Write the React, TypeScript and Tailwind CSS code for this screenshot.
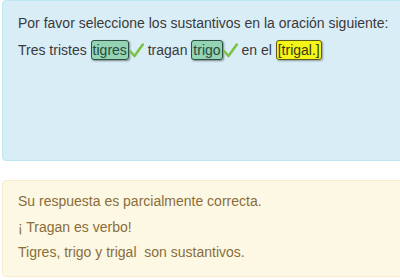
import React from "react";

function Check() {
  return (
    <svg width="15" height="16" viewBox="0 0 15 16" className="inline-block align-[-3px]">
      <path d="M1.5 9.5 L5.5 14 L13.8 2.5" fill="none" stroke="#7cc243" strokeWidth="2.6" strokeLinecap="round" strokeLinejoin="round" />
    </svg>
  );
}

function Chosen({ children }: { children: React.ReactNode }) {
  return (
    <span className="rounded-[3px] border border-[#2f4f44] bg-[#94d3b3] px-[1px] py-[1px] text-[#2a4a3d] shadow-[1px_1px_2px_rgba(0,0,0,0.45)]">
      {children}
    </span>
  );
}

export default function App() {
  return (
    <div className="h-[280px] w-[400px] overflow-hidden bg-white font-['Liberation_Sans',Arial,sans-serif]">
      <div className="ml-[2px] h-[161px] w-[420px] rounded-[4px] border border-[#bce8f1] bg-[#d9edf7] px-[15px] pt-[9px] text-[14px] leading-[27px] text-[#3a3a3a]">
        <p>Por favor seleccione los sustantivos en la oración siguiente:</p>
        <p>
          Tres tristes <Chosen>tigres</Chosen>
          <Check /> tragan <Chosen>trigo</Chosen>
          <Check /> en el{" "}
          <span className="rounded-[3px] border border-[#5a5a1a] bg-[#f5f51a] px-[1px] py-[1px] text-[#3a3a10] shadow-[1px_1px_2px_rgba(0,0,0,0.35)]">
            [trigal.]
          </span>
        </p>
      </div>
      <div className="ml-[2px] mt-[19px] h-[97px] w-[420px] rounded-[4px] border border-[#faebcc] bg-[#fcf8e3] px-[15px] pt-[8px] text-[14px] leading-[25.5px] text-[#8a6d3b]">
        <p>Su respuesta es parcialmente correcta.</p>
        <p>¡ Tragan es verbo!</p>
        <p>Tigres, trigo y trigal&nbsp; son sustantivos.</p>
      </div>
    </div>
  );
}
